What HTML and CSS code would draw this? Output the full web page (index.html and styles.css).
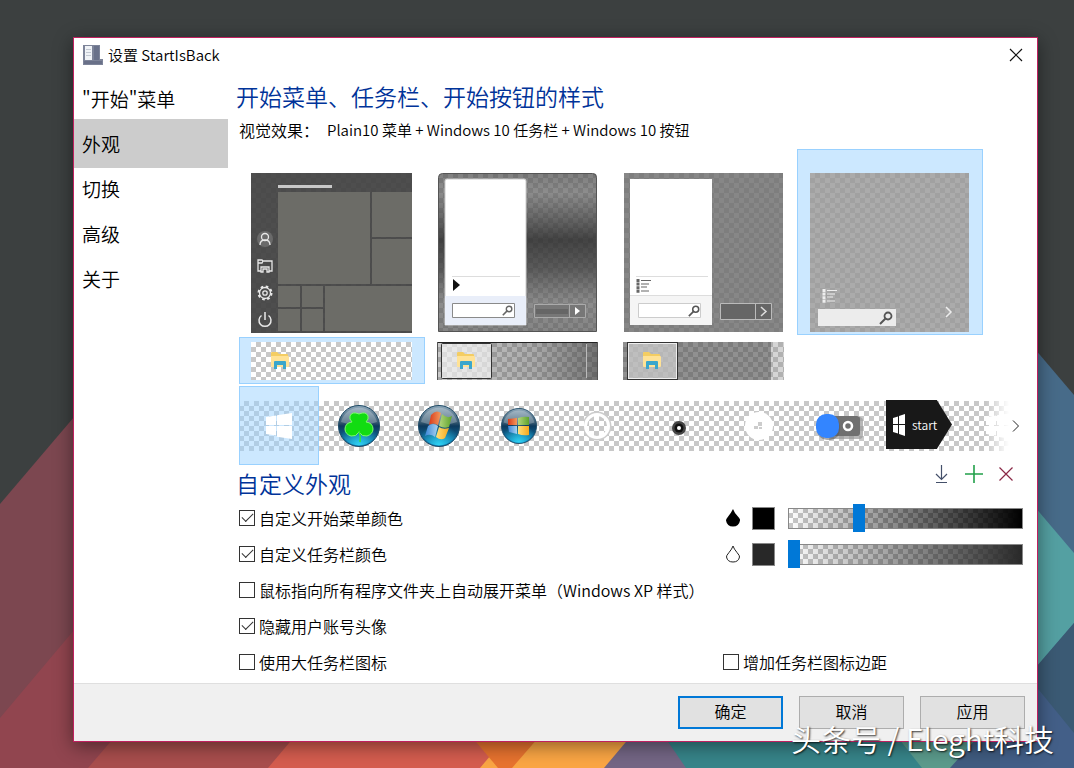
FILE: index.html
```
<!DOCTYPE html>
<html lang="zh-CN">
<head>
  <meta charset="UTF-8">
  <meta name="viewport" content="width=device-width, initial-scale=1">
  <title>设置 StartIsBack</title>
  <link rel="stylesheet" href="styles.css">
</head>
<body>

  <!-- wallpaper -->
  <svg class="wallpaper" viewBox="0 0 1074 768" preserveAspectRatio="none" aria-hidden="true">
    <rect width="1074" height="768" fill="#3c4040"/>
    <path fill="#7c4750" d="M0 504L160 316V768H0z"/>
    <path fill="#91454f" d="M0 718L160 528V768H0z"/>
    <path fill="#a94e4d" d="M88 768L160 684H400V768z"/>
    <path fill="#d55d4f" d="M268 768L300 730H500V768z"/>
    <path fill="#e8743a" d="M512 768L470 730H530V768z"/>
    <path fill="#fba644" d="M480 768L512 730H650L605 768z"/>
    <path fill="#e8732f" d="M466 730L498 768H512L545 730z"/>
    <path fill="#746685" d="M604 768L636 730H660L688 768z"/>
    <path fill="#37858a" d="M686 768L660 730H1074V768z"/>
    <path fill="#5b9b8c" d="M892 730L922 768H952L984 730z"/>
    <path fill="#405c80" d="M950 768L984 730H1074V768z"/>
    <path fill="#476b89" d="M1000 308L1074 395V768H1000z"/>
    <path fill="#54a0a2" d="M1000 466L1074 553V623L1000 709z"/>
    <path fill="#3b5a74" d="M1000 709L1074 623V768H1000z"/>
    <path fill="#435f88" d="M1000 642L1074 733V768H1000z"/>
  </svg>

  <!-- shared drawings -->
  <svg class="defs" width="0" height="0" aria-hidden="true">
    <defs>
      <pattern id="checker" width="10" height="10" patternUnits="userSpaceOnUse">
        <rect width="10" height="10" fill="#fff"/>
        <path fill="#c8c8c8" d="M5 0h5v5H5zM0 5h5v5H0z"/>
      </pattern>
      <linearGradient id="aero" x1="0" y1="0" x2="0" y2="1">
        <stop offset="0" stop-color="#555" stop-opacity=".75"/>
        <stop offset=".12" stop-color="#666" stop-opacity=".75"/>
        <stop offset=".42" stop-color="#333" stop-opacity=".92"/>
        <stop offset=".6" stop-color="#444" stop-opacity=".88"/>
        <stop offset=".82" stop-color="#666" stop-opacity=".75"/>
        <stop offset="1" stop-color="#5c5c5c" stop-opacity=".75"/>
      </linearGradient>
      <linearGradient id="bar7" x1="0" y1="0" x2="1" y2="0">
        <stop offset="0" stop-color="#666" stop-opacity=".35"/>
        <stop offset=".6" stop-color="#555" stop-opacity=".5"/>
        <stop offset="1" stop-color="#444" stop-opacity=".75"/>
      </linearGradient>
      <linearGradient id="orbRim" x1="0" y1="0" x2="0" y2="1">
        <stop offset="0" stop-color="#8fa9bb"/>
        <stop offset=".42" stop-color="#33566f"/>
        <stop offset=".5" stop-color="#0e3a5c"/>
        <stop offset="1" stop-color="#0c7fb8"/>
      </linearGradient>
      <radialGradient id="orbGlow" cx=".5" cy="1" r=".55">
        <stop offset="0" stop-color="#2fd4f5"/>
        <stop offset="1" stop-color="#2fd4f5" stop-opacity="0"/>
      </radialGradient>
      <linearGradient id="cRed"><stop offset="0" stop-color="#d83a1c"/><stop offset="1" stop-color="#f49a5c"/></linearGradient>
      <linearGradient id="cGreen"><stop offset="0" stop-color="#b4d67c"/><stop offset="1" stop-color="#5ea32c"/></linearGradient>
      <linearGradient id="cBlue"><stop offset="0" stop-color="#3a86d8"/><stop offset="1" stop-color="#a8d2f0"/></linearGradient>
      <linearGradient id="cYellow"><stop offset="0" stop-color="#ffe07c"/><stop offset="1" stop-color="#f6a81c"/></linearGradient>
      <symbol id="orb" viewBox="0 0 42 42">
        <circle cx="21" cy="21" r="20.500" fill="url(#orbRim)" stroke="#1d4a66"/>
        <circle cx="21" cy="21" r="19.500" fill="url(#orbGlow)"/>
        <path fill="#fff" opacity=".25" d="M3 17a18.500 18.500 0 0 1 36 0q-18 7-36 0z"/>
      </symbol>
      <symbol id="folder" viewBox="0 0 20 20">
        <path fill="#f4cd62" d="M1 2q0-1 1-1h5l2 2h8q1 0 1 1v5H1z"/>
        <path fill="#ffe296" d="M1 5h17q1 0 1 1v9q0 1-1 1H2q-1 0-1-1z"/>
        <path fill="#3aa6cc" d="M4 18v-7q0-1 1-1h10q1 0 1 1v7h-3v-4H7v4z"/>
      </symbol>
      <symbol id="mag" viewBox="0 0 14 14">
        <circle cx="9" cy="5" r="3.500" fill="none" stroke="currentColor" stroke-width="1.800"/>
        <path stroke="currentColor" stroke-width="2" d="M6.500 7.500L1 13"/>
      </symbol>
      <symbol id="list" viewBox="0 0 15 14">
        <path stroke="currentColor" stroke-width="3" stroke-dasharray="3 .6" d="M2 0v14"/>
        <path stroke="currentColor" stroke-width="1.200" d="M5 1.500h10M5 5h8M5 8h6M5 12h8"/>
      </symbol>
      <symbol id="win10" viewBox="0 0 26 26">
        <path fill="currentColor" d="M0 4l10-1.500V12H0zM11 2.300L26 0v12H11zM0 13h10v9.500L0 21zM11 13h15v13l-15-2.300z"/>
      </symbol>
    </defs>
  </svg>

  <div class="window">
    <header class="titlebar">
      <svg width="20" height="20" viewBox="0 0 20 20" aria-hidden="true">
        <path fill="#7d8499" d="M0 0h17v14h3v6H0z"/>
        <path fill="#f0f3f7" d="M2 1h7v14H2z"/>
        <path fill="#69718a" d="M11 1h5v14h-5z"/>
        <path stroke="#c3c9d3" d="M3 4.500h5M3 7.500h5M3 10.500h5"/>
        <path fill="#697088" d="M1 16h18v3H1z"/>
      </svg>
      <span class="title">设置 StartIsBack</span>
      <button class="close" type="button" aria-label="关闭">
        <svg width="14" height="14" viewBox="0 0 14 14"><path stroke="#111" stroke-width="1.200" d="M1 1l12 12M13 1L1 13"/></svg>
      </button>
    </header>

    <div class="body">
      <nav class="sidebar">
        <a href="#start">"开始"菜单</a>
        <a href="#look" class="active">外观</a>
        <a href="#switch">切换</a>
        <a href="#advanced">高级</a>
        <a href="#about">关于</a>
      </nav>

      <main class="content">
        <h1>开始菜单、任务栏、开始按钮的样式</h1>
        <p class="effect"><span>视觉效果：</span><span class="effect-name">Plain10 菜单 + Windows 10 任务栏 + Windows 10 按钮</span></p>

        <div class="tiles">
          <button class="tile" type="button" aria-label="Windows 10 菜单">
            <svg width="162" height="160" viewBox="0 0 162 160">
              <rect width="161" height="160" fill="url(#checker)"/>
              <rect width="161" height="160" fill="#454545" opacity=".95"/>
              <path fill="#6c6c67" d="M27 19h92v92H27zM121 19h40v45h-40zM121 66h40v45h-40zM27 113h22v21H27zM51 113h21v21H51zM27 136h22v22H27zM51 136h21v22H51zM74 113h87v45H74z"/>
              <path fill="#c8c8c8" d="M27 12h54v3H27z"/>
              <g fill="none" stroke="#e8e8e8" stroke-width="1.300">
                <circle cx="14" cy="66" r="8" fill="#6a6a6a" stroke="none"/>
                <circle cx="14" cy="64" r="3.500"/>
                <path d="M9 72q0-5 5-5t5 5"/>
                <path d="M10 98H7V87h4l1 1h9v10h-3M10 99v-5h8v5h-2v-3h-4v3zM7 90h4l1-2"/>
                <circle cx="14" cy="120" r="2.200"/>
                <circle cx="14" cy="120" r="5.500"/>
                <circle cx="14" cy="120" r="6.500" stroke-width="2" stroke-dasharray="2.600 2.500"/>
                <path d="M10.500 142.500a6 6 0 1 0 7 0M14 139v8" stroke-width="1.500"/>
              </g>
            </svg>
          </button>
          <button class="tile" type="button" aria-label="Windows 7 菜单">
            <svg width="160" height="160" viewBox="0 0 160 160">
              <rect width="159" height="159" rx="4" fill="url(#checker)"/>
              <path fill="url(#aero)" stroke="#555" d="M.5 158.500V4.500q0-4 4-4h150q4 0 4 4v154z"/>
              <path fill="#fff" stroke="#ccc" d="M7 8q0-2 2-2h77q2 0 2 2v144H7z"/>
              <path fill="#e9eef9" d="M7 123h81v29H7z"/>
              <path stroke="#ddd" d="M14 103.500h68"/>
              <path fill="#111" d="M15 106l7 6-7 6z"/>
              <path fill="#fff" stroke="#8a8a8a" d="M14.500 130.500h62v14h-62z"/>
              <use href="#mag" x="64" y="132" width="11" height="11" color="#666"/>
              <path fill="#777" stroke="#aaa" d="M96.500 131.500h51v13h-51zM131.500 131v14"/>
              <path fill="#666" d="M98 136h32v5H98z"/>
              <path fill="#fff" d="M137 134l5 4-5 4z"/>
            </svg>
          </button>
          <button class="tile" type="button" aria-label="Windows 8 菜单">
            <svg width="160" height="160" viewBox="0 0 160 160">
              <rect width="159" height="159" fill="url(#checker)"/>
              <rect width="159" height="159" fill="#707070" opacity=".84"/>
              <path fill="#fff" d="M6 6h82v146H6z"/>
              <path fill="#f5f5f5" d="M6 123h82v29H6z"/>
              <path stroke="#ddd" d="M12 103.500h72M6 122.500h82"/>
              <use href="#list" x="12" y="106" width="15" height="14" color="#666"/>
              <path fill="#fff" stroke="#ccc" d="M14.500 130.500h62v14h-62z"/>
              <use href="#mag" x="64" y="132" width="12" height="12" color="#555"/>
              <path fill="#666" stroke="#bbb" d="M96.500 130.500h51v16h-51zM131.500 131v15"/>
              <path fill="none" stroke="#ddd" stroke-width="1.500" d="M137 134l5 4.500-5 4.500"/>
            </svg>
          </button>
          <button class="tile selected" type="button" aria-label="Plain10 菜单">
            <svg width="160" height="160" viewBox="0 0 160 160">
              <rect width="159" height="159" fill="url(#checker)"/>
              <rect width="159" height="159" fill="#999" opacity=".82"/>
              <use href="#list" x="12" y="116" width="15" height="14" color="#eee"/>
              <path fill="#ececec" d="M8 136h78v17H8z"/>
              <use href="#mag" x="69" y="138" width="14" height="14" color="#555"/>
              <path fill="none" stroke="#eee" stroke-width="1.500" d="M136 134l5 5-5 5"/>
            </svg>
          </button>
        </div>

        <div class="tiles taskbars">
          <button class="tile selected" type="button" aria-label="Windows 10 任务栏">
            <svg width="162" height="38" viewBox="0 0 162 38">
              <rect width="161" height="38" fill="url(#checker)"/>
              <use href="#folder" x="19" y="9" width="20" height="20"/>
            </svg>
          </button>
          <button class="tile" type="button" aria-label="Windows 7 任务栏">
            <svg width="162" height="38" viewBox="0 0 162 38">
              <rect width="161" height="38" fill="url(#checker)"/>
              <rect width="161" height="38" fill="url(#bar7)"/>
              <path stroke="#222" d="M0 .5h161"/>
              <path stroke="#555" d="M.5 0v38M160.500 0v38"/>
              <rect x="4.500" y="1.500" width="50" height="35" rx="1" fill="#fff" fill-opacity=".6" stroke="#333"/>
              <path fill="none" stroke="#bbb" d="M149.500 2v34"/>
              <use href="#folder" x="19" y="9" width="20" height="20"/>
            </svg>
          </button>
          <button class="tile" type="button" aria-label="Windows 8 任务栏">
            <svg width="162" height="38" viewBox="0 0 162 38">
              <rect width="161" height="38" fill="url(#checker)"/>
              <rect width="148" height="38" fill="#555" opacity=".65"/>
              <rect x="148" width="13" height="38" fill="#888" opacity=".35"/>
              <rect x="4.500" y=".5" width="50" height="37" fill="#ddd" fill-opacity=".6" stroke="#333"/>
              <rect x="5.500" y="1.500" width="48" height="35" fill="none" stroke="#eee"/>
              <use href="#folder" x="19" y="9" width="20" height="20"/>
            </svg>
          </button>
        </div>

        <div class="orbs">
          <div class="orb-strip">
            <button class="orb selected" type="button" aria-label="Windows 10 按钮">
              <svg class="white" width="26" height="26"><use href="#win10"/></svg>
            </button>
            <button class="orb" type="button" aria-label="三叶草按钮">
              <svg width="42" height="42" viewBox="0 0 42 42">
                <use href="#orb"/>
                <path fill="#12dc12" stroke="#7dff6a" d="M21 27q-3 5-8 4-6-2-6-7 0-6 7-7-3-3-2-6 2-5 9-2 7-3 9 2 1 3-2 6 7 1 7 7 0 5-6 7-5 1-8-4z"/>
                <path fill="none" stroke="#32e832" stroke-width="1.500" d="M21 26q2 6 1 11"/>
              </svg>
            </button>
            <button class="orb" type="button" aria-label="Windows Vista 按钮">
              <svg width="42" height="42" viewBox="0 0 42 42">
                <use href="#orb"/>
                <path fill="url(#cRed)" d="M13 10q5-6 10-2l-3 12q-5-3-9 0z"/>
                <path fill="url(#cGreen)" d="M24 9q5 5 10 2l-3 11q-5 2-10-1z"/>
                <path fill="url(#cBlue)" d="M10 21q5-4 10 0l-3 11q-5-4-10-1z"/>
                <path fill="url(#cYellow)" d="M21 22q4 3 10 1l-4 10q-4 3-9-1z"/>
              </svg>
            </button>
            <button class="orb" type="button" aria-label="Windows 7 按钮">
              <svg width="36" height="36" viewBox="0 0 36 36">
                <use href="#orb" width="36" height="36"/>
                <path fill="url(#cRed)" d="M7 11l9-1v7H7z"/>
                <path fill="url(#cGreen)" d="M17 10q6-2 11-1v8H17z"/>
                <path fill="url(#cBlue)" d="M7 18h9v8l-8-2z"/>
                <path fill="url(#cYellow)" d="M17 18h11v9q-6 1-11-1z"/>
              </svg>
            </button>
            <button class="orb" type="button" aria-label="圆环按钮">
              <svg width="30" height="30" viewBox="0 0 30 30">
                <circle cx="13" cy="15" r="12.500" fill="none" stroke="#ccc" stroke-width="4"/>
                <circle cx="13" cy="15" r="11.500" fill="none" stroke="#fff" stroke-width="3"/>
              </svg>
            </button>
            <button class="orb" type="button" aria-label="圆点按钮">
              <svg width="14" height="18" viewBox="0 0 14 18">
                <circle cx="7" cy="11" r="7" fill="#444"/>
                <circle cx="7" cy="11" r="4.500" fill="#111"/>
                <circle cx="7" cy="11" r="2" fill="#fff"/>
              </svg>
            </button>
            <button class="orb" type="button" aria-label="白色圆形按钮">
              <svg width="30" height="30" viewBox="0 0 30 30">
                <circle cx="15" cy="15" r="14" fill="#fff"/>
                <path fill="#ccc" d="M14 11h4v4h-4zM10 15h4v3h-4zM15 16h3v2h-3z"/>
              </svg>
            </button>
            <button class="orb" type="button" aria-label="开关按钮">
              <svg width="48" height="30" viewBox="0 0 48 30">
                <rect x="14" y="6" width="34" height="22" rx="4" fill="#999" opacity=".7"/>
                <rect x="12" y="5" width="33" height="20" rx="3" fill="#707070"/>
                <rect x="2" y="5" width="23" height="24" rx="10" fill="#555" opacity=".5"/>
                <rect x="1" y="3" width="23" height="24" rx="10" fill="#3385ff"/>
                <circle cx="33" cy="15" r="4" fill="none" stroke="#fff" stroke-width="2.500"/>
              </svg>
            </button>
            <button class="orb start" type="button" aria-label="start 按钮">
              <svg class="white" width="12" height="22" viewBox="0 0 12 22"><path fill="currentColor" d="M0 4l5-1.500V10H0zM6 2l6-2v10H6zM0 11h5v8.500L0 18zM6 11h6v11l-6-2z"/></svg>
              <span>start</span>
            </button>
            <button class="orb" type="button" aria-label="白色徽标按钮">
              <svg class="white" width="26" height="26"><use href="#win10"/></svg>
            </button>
          </div>
          <button class="more" type="button" aria-label="更多">
            <svg width="8" height="12" viewBox="0 0 8 12"><path fill="none" stroke="#222" d="M1 .5L6.500 6 1 11.500"/></svg>
          </button>
        </div>

        <div class="section-head">
          <h2>自定义外观</h2>
          <div class="tools">
            <button type="button" aria-label="下载">
              <svg width="18" height="18" viewBox="0 0 18 18"><path fill="none" stroke="#44506a" stroke-width="1.200" d="M8.500 0v14M3 9l5.500 5.500L14 9M3 17.500h11"/></svg>
            </button>
            <button type="button" aria-label="添加">
              <svg width="18" height="18" viewBox="0 0 18 18"><path stroke="#22a04a" stroke-width="1.600" d="M9 0v18M0 9h18"/></svg>
            </button>
            <button type="button" aria-label="删除">
              <svg width="18" height="18" viewBox="0 0 18 18"><path stroke="#8a2846" stroke-width="1.200" d="M2.500 2.500l13 13M15.500 2.500l-13 13"/></svg>
            </button>
          </div>
        </div>

        <div class="options">
          <label class="check"><input type="checkbox" checked>自定义开始菜单颜色</label>
          <div class="color">
            <svg width="14" height="18" viewBox="0 0 14 18" aria-hidden="true"><path fill="#000" d="M7 0q1.500 4 4.500 7T14 11.500Q13 17.500 7 17.500T0 11.500Q0 10 2.500 7T7 0z"/></svg>
            <button class="swatch black" type="button" aria-label="开始菜单颜色"></button>
            <input class="to-black" type="range" min="0" max="100" value="29" aria-label="开始菜单透明度">
          </div>

          <label class="check"><input type="checkbox" checked>自定义任务栏颜色</label>
          <div class="color">
            <svg width="14" height="18" viewBox="0 0 14 18" aria-hidden="true"><path fill="#fff" stroke="#222" d="M7 1q1 3 4 6.500t2.500 4.500Q12.500 17 7 17T.5 12Q0 11 3 7.500T7 1z"/></svg>
            <button class="swatch gray" type="button" aria-label="任务栏颜色"></button>
            <input class="to-gray" type="range" min="0" max="100" value="0" aria-label="任务栏透明度">
          </div>

          <label class="check wide"><input type="checkbox">鼠标指向所有程序文件夹上自动展开菜单（Windows XP 样式）</label>
          <label class="check wide"><input type="checkbox" checked>隐藏用户账号头像</label>
          <label class="check"><input type="checkbox">使用大任务栏图标</label>
          <label class="check"><input type="checkbox">增加任务栏图标边距</label>
        </div>
      </main>
    </div>

    <footer class="footer">
      <button class="primary" type="button">确定</button>
      <button type="button">取消</button>
      <button type="button">应用</button>
    </footer>
  </div>

  <div class="watermark">头条号 / Eleght科技</div>

</body>
</html>
```
FILE: styles.css
```
* {
  box-sizing: border-box;
}
body {
  margin: 0;
  padding: 37px 36px 26px 73px;
  min-height: 100vh;
  position: relative;
  background: #3c4040;
  font-family: "Noto Sans CJK SC", sans-serif;
  font-size: 16px;
  font-weight: 350;
  color: #000;
  display: flex;
}
button {
  padding: 0;
  border: none;
  background: none;
  font: inherit;
  color: inherit;
}
svg {
  display: block;
  flex: none;
}
.wallpaper {
  position: absolute;
  left: 0;
  top: 0;
  width: 100%;
  height: 100%;
}
.defs {
  position: absolute;
}
.white {
  color: #fff;
}

/* window */
.window {
  position: relative;
  flex: 1;
  min-width: 0;
  display: flex;
  flex-direction: column;
  background: #fff;
  border: 1px solid #c0205f;
  box-shadow: 0 4px 18px rgba(0, 0, 0, 0.45);
}
.titlebar {
  height: 36px;
  padding: 0 14px 2px 9px;
  display: flex;
  align-items: center;
}
.title {
  margin-left: 5px;
  padding-bottom: 2px;
  font-size: 15px;
}
.close {
  margin-left: auto;
}
.body {
  flex: 1;
  display: flex;
}

/* sidebar */
.sidebar {
  width: 154px;
  flex: none;
}
.sidebar a {
  display: block;
  height: 49px;
  margin-bottom: -4px;
  padding-left: 8px;
  line-height: 49px;
  font-size: 19px;
  color: #000;
  text-decoration: none;
}
.sidebar .active {
  background: #ccc;
}

/* content */
.content {
  flex: 1;
  min-width: 0;
  padding: 6px 14px 3px 11px;
}
h1,
h2 {
  margin: 0 0 0 -3px;
  font-size: 23px;
  font-weight: 350;
  line-height: 32px;
  color: #003399;
}
.effect {
  margin: 6px 0 7px;
  display: flex;
  gap: 8px;
  line-height: 24px;
}
.effect-name {
  font-size: 15px;
}
.tiles {
  display: flex;
  margin-bottom: 2px;
}
.tile {
  width: 186px;
  height: 186px;
  padding-top: 23px;
  border: 1px solid transparent;
  display: flex;
  justify-content: center;
}
.tile.selected {
  background: #cce8ff;
  border-color: #99d1ff;
}
.taskbars .tile {
  height: 47px;
  padding-top: 4px;
}

/* start button strip */
.orbs {
  display: flex;
}
.orb-strip {
  flex: 1;
  min-width: 0;
  height: 79px;
  overflow: hidden;
  display: flex;
  background: linear-gradient(#fff 15px, transparent 15px 65px, #fff 65px), linear-gradient(90deg, transparent 97%, #fff), repeating-conic-gradient(#c8c8c8 0 25%, #fff 0 50%) 0 5px / 10px 10px;
}
.orb {
  width: 80px;
  flex: none;
  display: flex;
  align-items: center;
  justify-content: center;
}
.orb.selected {
  background: rgba(153, 209, 255, 0.5);
  border: 1px solid #99d1ff;
}
.orb.start {
  height: 49px;
  width: 66px;
  margin: 14px 7px;
  padding-left: 7px;
  gap: 7px;
  justify-content: flex-start;
  background: #181818;
  clip-path: polygon(0 0, 77% 0, 100% 50%, 77% 100%, 0 100%);
  color: #fff;
  font-size: 12px;
}
.more {
  width: 14px;
  flex: none;
  display: flex;
  align-items: center;
  justify-content: center;
}

/* custom look */
.section-head {
  height: 35px;
  display: flex;
  justify-content: space-between;
}
.section-head h2 {
  padding-top: 2px;
}
.tools {
  display: flex;
  margin-right: 1px;
}
.tools button {
  width: 32px;
  height: 18px;
  display: flex;
  justify-content: center;
}
.options {
  display: grid;
  grid-template-columns: 1fr 300px;
  grid-auto-rows: 36px;
  align-items: center;
}
.wide {
  grid-column: 1 / 3;
}
.check {
  display: flex;
  align-items: center;
  gap: 4px;
  line-height: 34px;
  padding-bottom: 1px;
  white-space: nowrap;
}
.check input {
  appearance: none;
  width: 16px;
  height: 16px;
  margin: 0;
  border: 1px solid #333;
  background: #fff;
  display: grid;
  place-items: center;
}
.check input:checked::before {
  content: "";
  width: 10px;
  height: 5px;
  margin-bottom: 3px;
  border-left: 1px solid #333;
  border-bottom: 1px solid #333;
  transform: rotate(-45deg);
}
.color {
  display: flex;
  align-items: center;
  padding-left: 3px;
}
.swatch {
  width: 23px;
  height: 23px;
  margin: 0 13px 0 12px;
  border: 1px solid #888;
}
.black {
  background: #000;
}
.gray {
  background: #282828;
}
input[type="range"] {
  appearance: none;
  flex: 1;
  min-width: 0;
  height: 28px;
  margin: 0;
  background: none;
}
input[type="range"]::-webkit-slider-runnable-track {
  height: 21px;
  box-shadow: inset 0 0 0 1px #888;
  background: linear-gradient(90deg, transparent, var(--end)), repeating-conic-gradient(#c8c8c8 0 25%, #fff 0 50%) 0 0 / 10px 10px;
}
input[type="range"]::-webkit-slider-thumb {
  appearance: none;
  width: 12px;
  height: 28px;
  margin-top: -4px;
  background: #0078d7;
}
.to-black {
  --end: #000;
}
.to-gray {
  --end: #282828;
}

/* footer */
.footer {
  padding: 12px;
  display: flex;
  justify-content: flex-end;
  gap: 16px;
  background: #f0f0f0;
  border-top: 1px solid #dfdfdf;
}
.footer button {
  width: 105px;
  height: 33px;
  padding-bottom: 3px;
  background: #e1e1e1;
  border: 1px solid #adadad;
}
.footer .primary {
  border: 2px solid #0078d7;
}

.watermark {
  position: absolute;
  right: 20px;
  bottom: 10px;
  font-size: 30px;
  line-height: 40px;
  color: #fff;
  text-shadow: 1px 1px 2px rgba(0, 0, 0, 0.8);
}
```
